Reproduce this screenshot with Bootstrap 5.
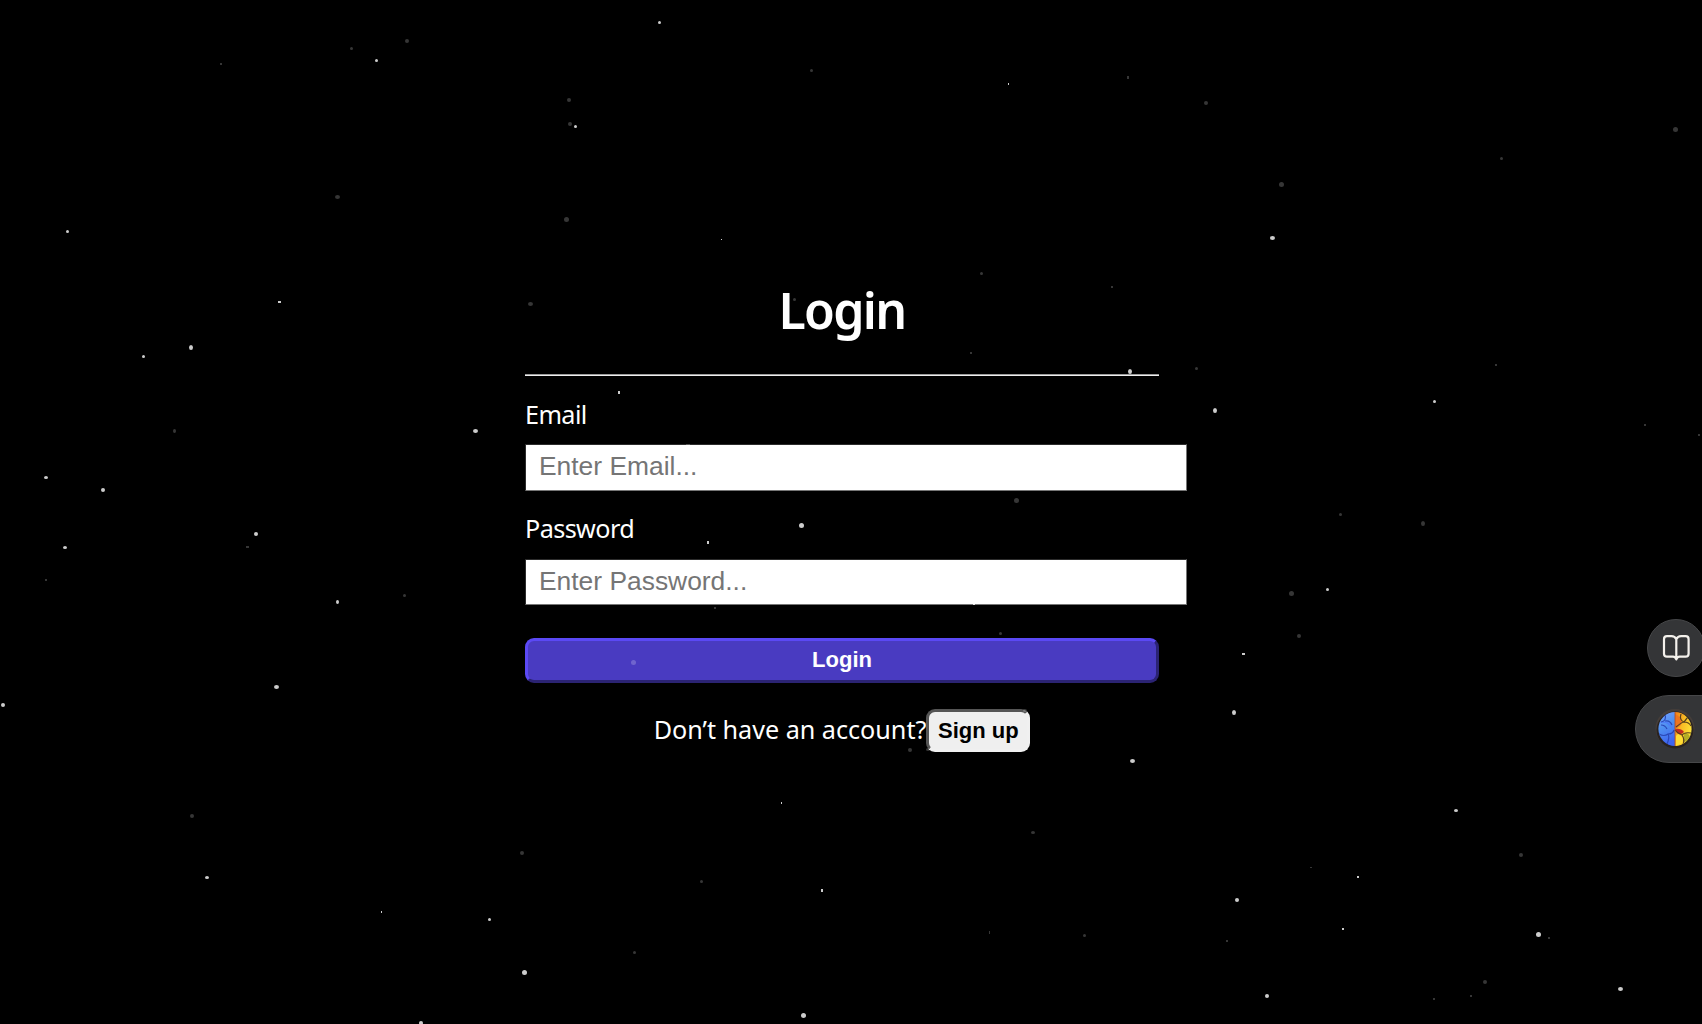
<!DOCTYPE html>
<html lang="en">
<head>
  <meta charset="UTF-8" />
  <meta name="viewport" content="width=device-width, initial-scale=1" />
  <title>Login</title>
  <link href="https://cdn.jsdelivr.net/npm/bootstrap@5.3.0/dist/css/bootstrap.min.css" rel="stylesheet" />
  <style>
    body {
      background-color: #000;
      color: #fff;
      font-family: "Segoe UI", "Noto Sans", sans-serif;
      overflow: hidden;
    }
    main {
      padding: 277px 18px 0 0;
    }
    .login-form {
      width: 634px;
    }
    h1 {
      font-size: 50px;
      line-height: 66px;
      font-weight: 600;
      letter-spacing: -1.7px;
      margin: 0 0 31px;
    }
    .login-line {
      height: 2px;
      border-top: 1px solid #9a9a9a;
      background: #eee;
      margin-bottom: 21px;
    }
    .form-label {
      font-size: 25.2px;
      line-height: 34px;
      letter-spacing: -0.6px;
      padding-left: 0;
      margin: 0 0 13px;
    }
    .login-input {
      display: block;
      width: 662px;
      height: 47px;
      padding: 0 13px 2px;
      border: 1px solid;
      border-color: #2c2c2c #767676 #767676 #2c2c2c;
      font: 26.4px "Liberation Sans", Arial, sans-serif;
      margin-bottom: 20px;
      background: #fff;
    }
    .login-input::placeholder {
      color: #757575;
      opacity: 1;
    }
    #password {
      height: 46px;
      margin: 14px 0 33px;
    }
    .btn-login, .btn-signup {
      font: bold 22px/25px "Liberation Sans", Arial, sans-serif;
      border: 3px solid;
      border-radius: 9px;
    }
    .btn-login {
      height: 45px;
      padding: 0 0 2px;
      color: #fff;
      background: #493bc1;
      border-color: #5b49f5 #2b2373 #2b2373 #5b49f5;
    }
    .btn-signup {
      height: 43px;
      width: 104px;
      padding: 0;
      color: #000;
      background: #efefef;
      border-color: #555 #f0f0f0 #f0f0f0 #555;
    }
    .signup-row {
      margin-top: 26px;
      font-size: 25.2px;
    }
    .signup-row span {
      padding-bottom: 2px;
      letter-spacing: -0.02px;
    }
    /* sky and side buttons float over the page */
    #stars {
      position: absolute;
      inset: 0;
      width: 100%;
      height: 100%;
      pointer-events: none;
    }
    .side-tools {
      position: absolute;
      top: 619px;
      right: -3px;
      gap: 18px;
    }
    .tool-book, .tool-brain {
      background: #343537;
      border: 1px solid #464749;
    }
    .tool-book {
      width: 58px;
      height: 58px;
    }
    .tool-brain {
      width: 70px;
      height: 68px;
      border-radius: 34px 0 0 34px;
      padding-left: 19px;
    }
  </style>
</head>
<body class="vh-100 position-relative">

  <main class="d-flex justify-content-center">
    <form class="login-form">
      <h1 class="text-center">Login</h1>
      <div class="login-line"></div>

      <label for="email" class="form-label d-block">Email</label>
      <input type="email" id="email" class="login-input" placeholder="Enter Email..." />

      <label for="password" class="form-label d-block">Password</label>
      <input type="password" id="password" class="login-input" placeholder="Enter Password..." />

      <button type="submit" class="btn btn-login d-block w-100">Login</button>

      <div class="signup-row d-flex justify-content-center align-items-center">
        <span>Don’t have an account?</span>
        <button type="button" class="btn btn-signup">Sign up</button>
      </div>
    </form>
  </main>

  <svg id="stars"></svg>

  <div class="side-tools d-flex flex-column align-items-end">
    <div class="tool-book rounded-circle d-flex align-items-center justify-content-center">
      <svg width="28" height="28" viewBox="0 0 28 28" fill="none" stroke="#f4f1ec" stroke-width="2.2" stroke-linecap="round" stroke-linejoin="round">
        <path d="M14.300 5.200C13.300 3.200 11.800 2.200 9.500 2.200H5C3 2.200 2 3.200 2 5.200v14.500c0 2 1 3 3 3h6c1.800 0 2.600.7 3.300 2.700.7-2 1.500-2.700 3.300-2.700h6c2 0 3-1 3-3V5.200c0-2-1-3-3-3h-4.500c-2.300 0-3.800 1-4.800 3zV23" />
      </svg>
    </div>
    <div class="tool-brain d-flex align-items-center">
      <svg width="40" height="42" viewBox="-20 -21 40 42">
        <defs>
          <clipPath id="brainClip"><ellipse rx="16.600" ry="17" /></clipPath>
          <linearGradient id="blueSide" x1="0" y1="0" x2="0.3" y2="1">
            <stop offset="0" stop-color="#7ba2ff" />
            <stop offset="0.5" stop-color="#4f90f0" />
            <stop offset="1" stop-color="#3f66f0" />
          </linearGradient>
          <linearGradient id="goldSide" x1="0" y1="0" x2="1" y2="0.6">
            <stop offset="0" stop-color="#f17a19" />
            <stop offset="0.5" stop-color="#f8bd25" />
            <stop offset="1" stop-color="#ffe83b" />
          </linearGradient>
        </defs>
        <circle cy="-0.5" r="19.500" fill="#453e3a" />
        <circle cy="1" r="18.500" fill="#292321" />
        <g clip-path="url(#brainClip)">
          <rect x="-17" y="-17" width="17" height="34" fill="url(#blueSide)" />
          <rect y="-17" width="17" height="34" fill="url(#goldSide)" />
          <path d="M0 0L0-15Q10-10 5-3Z" fill="#ee7420" />
          <path d="M0 0Q6-1 9 3Q5 7 2 4Z" fill="#c52c20" />
          <path d="M9 4Q16 4 15 11L9 13Z" fill="#b4ad25" />
          <path d="M3 5Q10 8 7 14L1 17V7Z" fill="#ffdd35" />
          <path d="M-15-6Q-8-10-4-4L0 0Q-5-2-9-6" fill="#4d7df8" />
          <g fill="none" stroke-width="1.200">
            <path stroke="#2a48b8" d="M-10-15Q-8-8-14-7M-10-8Q-5-9-3-4M-16 5Q-11 8-7 5Q-5 8-8 15M-7 5Q-2 5-1 1M-14-4Q-10-4-8 0" />
            <path stroke="#57401c" d="M6-15Q4-9 9-7Q12-11 13-12M9-7Q14-7 16-3M1-2Q7-7 9-7M16 4Q9 3 7 6Q10 10 8 16M7 6Q2 4 0 1" />
            <path stroke="#ab4a22" stroke-width="0.800" d="M0-17V17" />
          </g>
        </g>
      </svg>
    </div>
  </div>

  <script>
    // center x, center y, width, height
    const brightStars = [
      [376.5,60.5,3,3],[67.5,231.5,3,3],[279.5,302,3,2],[191,347.5,4,5],[143.5,356.5,3,3],
      [475.5,431,5,4],[46,477.5,4,3],[103,490,4,4],[659.5,22.5,3,3],[575.5,126.5,3,3],
      [1008.5,84,1,2],[721.5,239.5,1,1],[1272.5,238,5,4],[1215,410.5,4,5],[1434.5,401.5,3,3],
      [256,534,4,4],[65,547.5,4,3],[337.5,602,3,4],[276.5,687,5,4],[3,705,4,4],
      [207,877.5,4,3],[381.5,912,1,2],[489.5,919.5,3,3],[524.5,972.5,5,5],[421,1023,4,4],
      [781.5,803,1,2],[822,890.5,2,3],[803.5,1015.5,5,5],[1132.5,761,5,4],[1327.5,589.5,3,3],
      [1243.5,654,3,2],[1234,712.5,4,5],[1456,810.5,4,3],[1358,877,2,2],[1237,900,4,4],
      [1343,929,2,2],[1538.5,934.5,5,5],[1267,996,4,4],[1620.5,989,5,4],[619,392.5,2,3],
      [801.5,525.5,5,5],[708,542.5,2,3],[1130,371.5,4,5],[974,604.5,2,1]
    ];
    const dimStars = [
      [407,41,4,4],[351.5,48.5,3,3],[221,64,2,2],[337.5,197,5,4],[569,100,4,4],
      [570,124,4,4],[566.5,219.5,5,5],[530.5,304,5,4],[174.5,431.5,3,4],[811.5,70.5,3,3],
      [1128,77.5,2,3],[981.5,273.5,3,3],[1112,287,2,2],[794.5,299.5,3,3],[1206,103,4,4],
      [1675.5,130,5,5],[1501.5,158.5,3,3],[1281.5,185,5,5],[1196.5,368.5,3,3],[1496,365,2,2],
      [1645,425.5,2,2],[1699,435.5,2,2],[247.5,547,3,2],[46,580,2,2],[404.5,596,3,3],
      [192,816,4,4],[522,853,4,4],[910,750,4,4],[1033,832.5,4,3],[701.5,881.5,3,3],
      [989.5,932.5,1,3],[1084.5,935.5,3,3],[634.5,953,3,3],[1340.5,514.5,3,3],[1423,523.5,4,5],
      [1291.5,594,5,5],[1299,636,4,4],[1521,855,4,4],[1311,867.5,2,1],[1227,941,2,2],
      [1549,938,2,2],[1485,982,4,4],[1471,996,2,2],[1434,999,2,2],[715,608,2,2],
      [633.5,662.5,5,5],[971,353,2,2],[1016.5,501,5,5],[1000.5,634,3,3],[1025,711,4,3],
      [928,750,4,3],[688,444.5,4,1]
    ];

    function drawStars(list, opacity) {
      return list.map(([x, y, w, h]) => {
        const r = Math.min(w, h) > 2 ? 'rx="' + w / 2 + '" ry="' + h / 2 + '"' : '';
        return `<rect x="${Math.floor(x - w / 2)}" y="${Math.floor(y - h / 2)}" width="${w}" height="${h}" ${r} fill="#fff" fill-opacity="${opacity}" />`;
      }).join('');
    }

    document.getElementById('stars').innerHTML = drawStars(brightStars, 0.8) + drawStars(dimStars, 0.21);
  </script>

  <script src="https://cdn.jsdelivr.net/npm/bootstrap@5.3.0/dist/js/bootstrap.bundle.min.js"></script>
</body>
</html>
